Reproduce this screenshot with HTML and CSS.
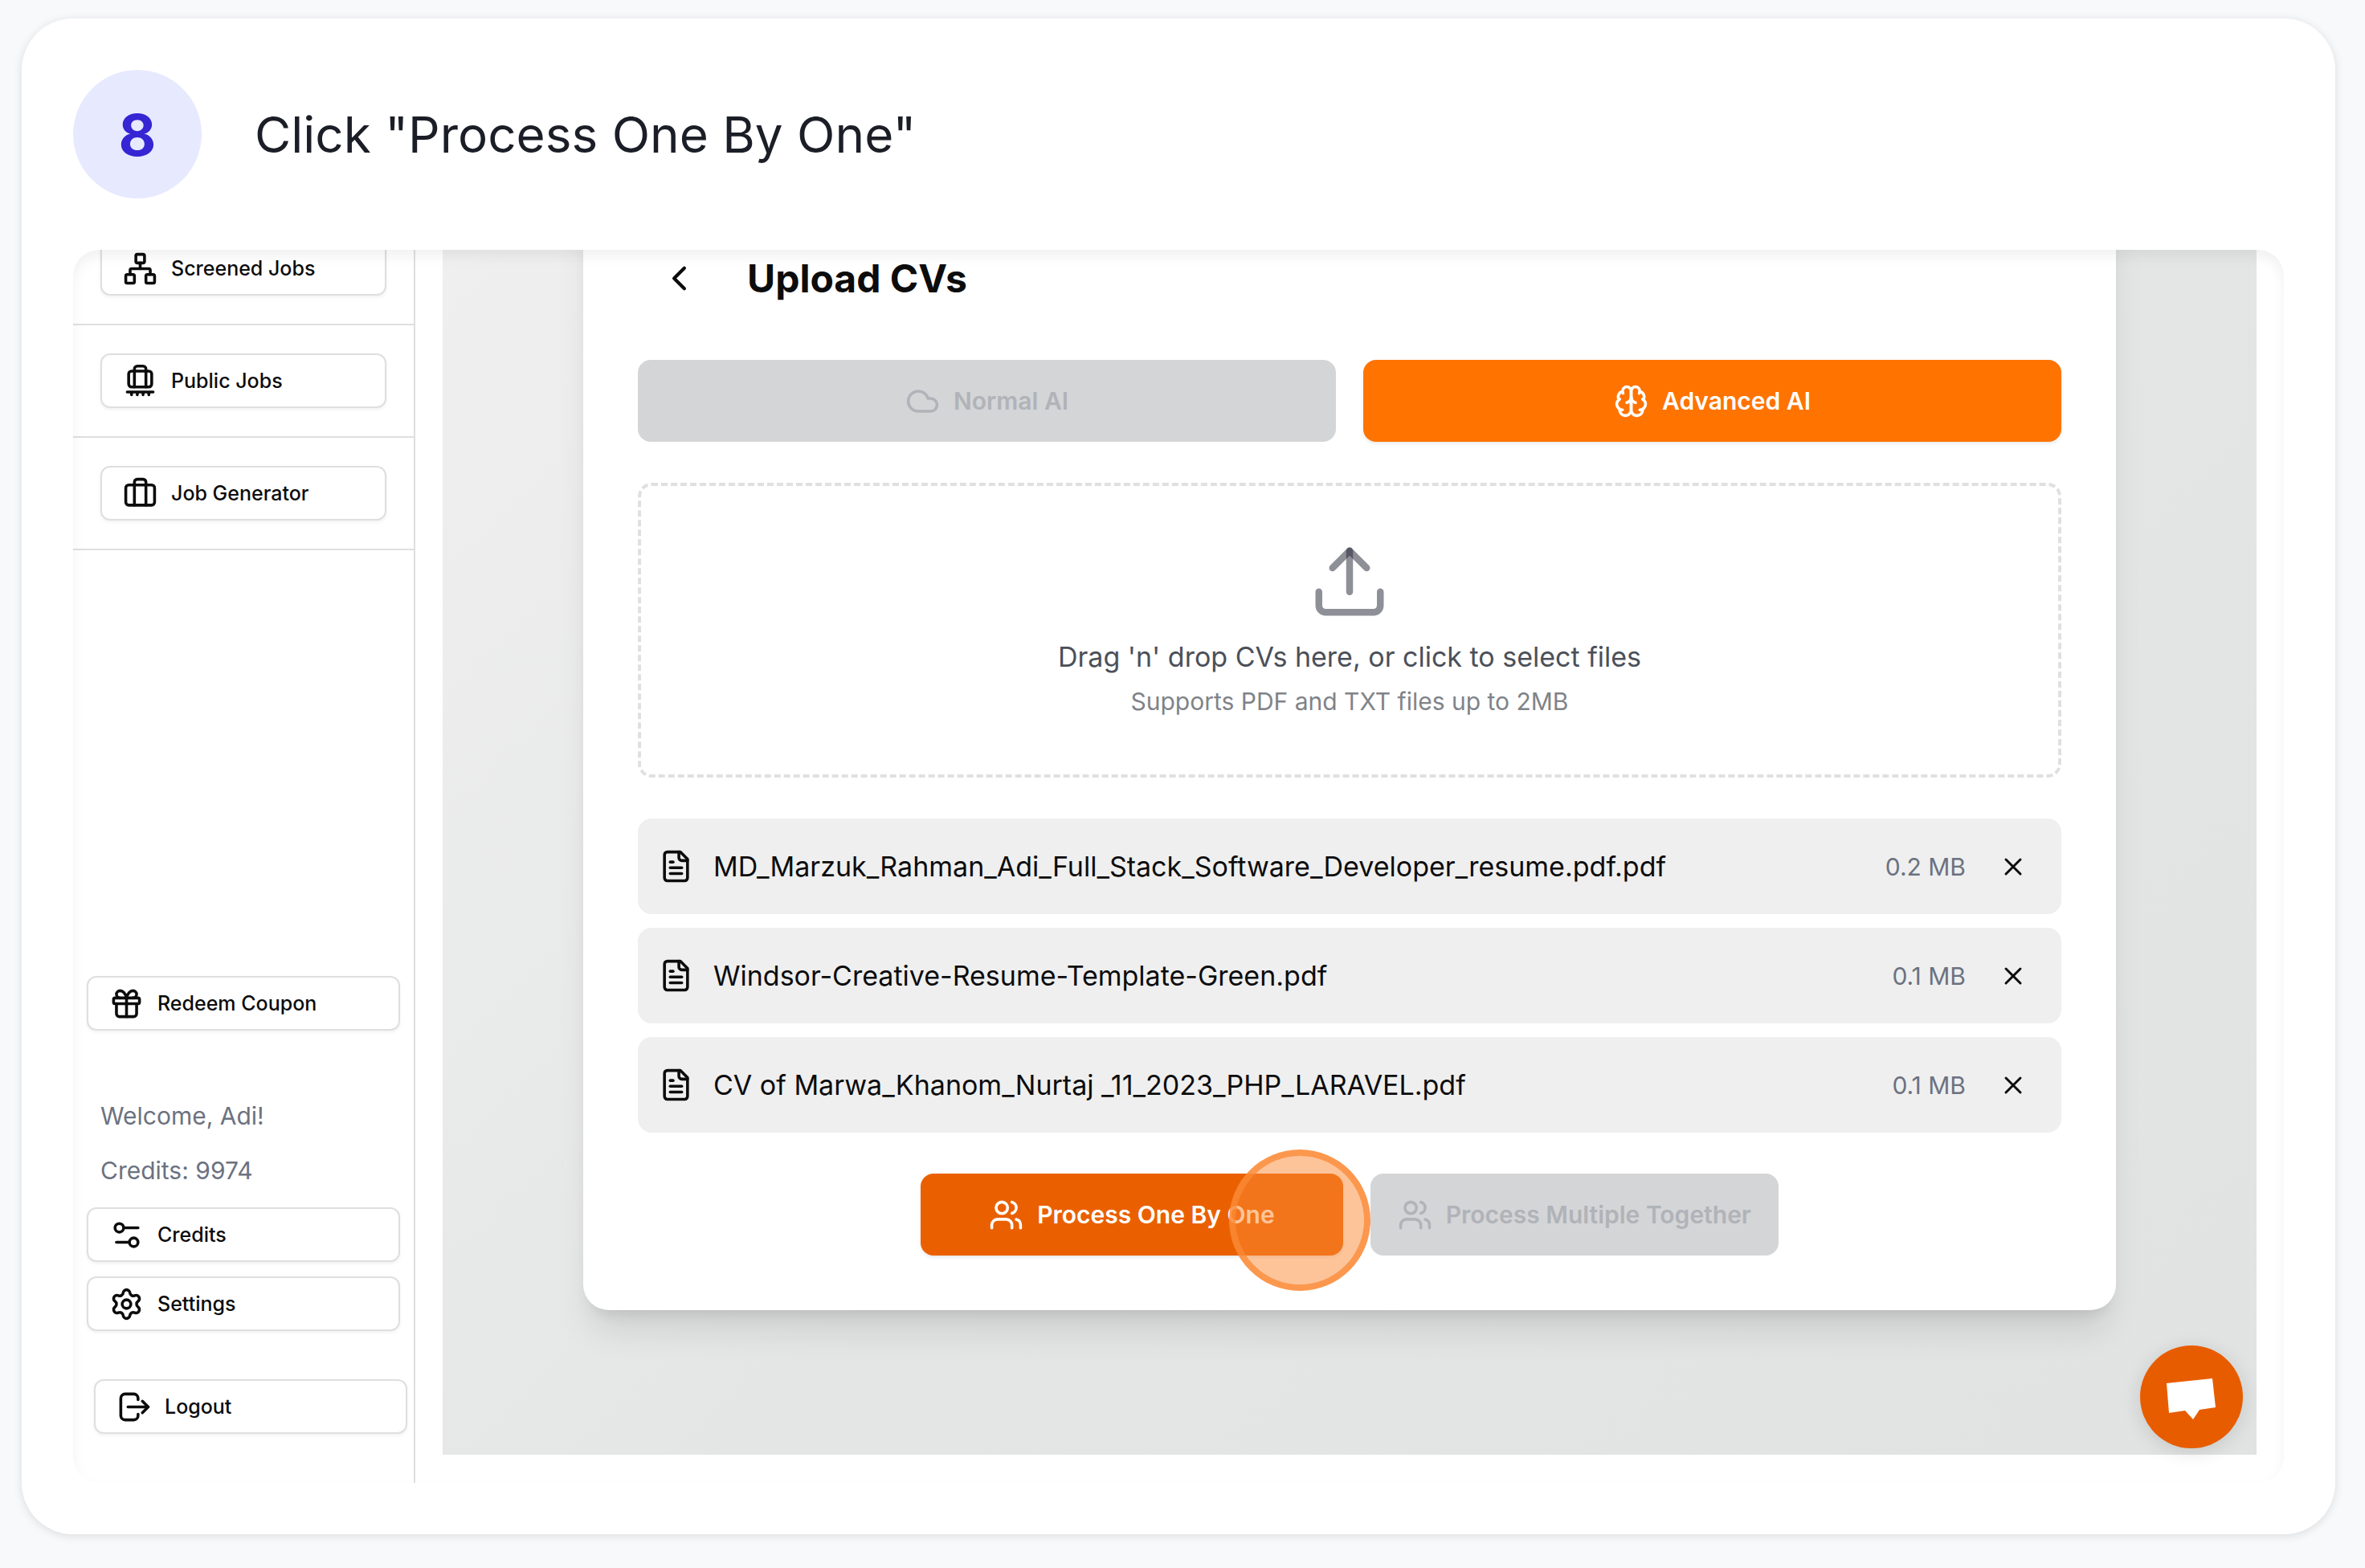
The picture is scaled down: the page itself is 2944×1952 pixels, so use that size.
FILE: index.html
```
<!DOCTYPE html>
<html lang="en">
<head>
  <meta charset="UTF-8">
  <meta name="viewport" content="width=device-width, initial-scale=1.0">
  <title>Process One By One</title>
  <link rel="stylesheet" href="styles.css">
</head>
<body>

  <div class="step-card">
    <header class="step-header">
      <span class="step-number">8</span>
      <h1>Click "Process One By One"</h1>
    </header>

    <div class="screen">
      <aside class="sidebar">
        <nav class="nav">
          <div class="nav-item">
            <button type="button" class="side-btn">
              <svg class="icon" viewBox="0 0 24 24"><rect x="16" y="16" width="6" height="6" rx="1"/><rect x="2" y="16" width="6" height="6" rx="1"/><rect x="9" y="2" width="6" height="6" rx="1"/><path d="M5 16v-3a1 1 0 0 1 1-1h12a1 1 0 0 1 1 1v3"/><path d="M12 12V8"/></svg>
              Screened Jobs
            </button>
          </div>
          <div class="nav-item">
            <button type="button" class="side-btn">
              <svg class="icon" viewBox="0 0 24 24"><rect x="4" y="5" width="16" height="11" rx="2"/><path d="M8 16V3.500a2 2 0 0 1 2-2h4a2 2 0 0 1 2 2V16"/><path d="M3 19.500h18"/><path d="M6 20v1.500M10 20v1.500M14 20v1.500M18 20v1.500"/></svg>
              Public Jobs
            </button>
          </div>
          <div class="nav-item">
            <button type="button" class="side-btn">
              <svg class="icon" viewBox="0 0 24 24"><path d="M16 20V4a2 2 0 0 0-2-2h-4a2 2 0 0 0-2 2v16"/><rect x="2" y="6" width="20" height="14" rx="2"/></svg>
              Job Generator
            </button>
          </div>
        </nav>

        <div class="account">
          <button type="button" class="side-btn">
            <svg class="icon" viewBox="0 0 24 24"><rect x="3" y="8" width="18" height="4" rx="1"/><path d="M12 8v13"/><path d="M19 12v7a2 2 0 0 1-2 2H7a2 2 0 0 1-2-2v-7"/><path d="M7.500 8a2.500 2.500 0 0 1 0-5A4.800 8 0 0 1 12 8a4.800 8 0 0 1 4.500-5 2.500 2.500 0 0 1 0 5"/></svg>
            Redeem Coupon
          </button>
          <div class="user-info">
            <p>Welcome, Adi!</p>
            <p>Credits: 9974</p>
          </div>
          <button type="button" class="side-btn">
            <svg class="icon" viewBox="0 0 24 24"><path d="M20 7h-9"/><path d="M14 17H5"/><circle cx="17" cy="17" r="3"/><circle cx="7" cy="7" r="3"/></svg>
            Credits
          </button>
          <button type="button" class="side-btn">
            <svg class="icon" viewBox="0 0 24 24"><path d="M9.671 4.136a2.340 2.340 0 0 1 4.659 0 2.340 2.340 0 0 0 3.319 1.915 2.340 2.340 0 0 1 2.330 4.033 2.340 2.340 0 0 0 0 3.831 2.340 2.340 0 0 1-2.330 4.033 2.340 2.340 0 0 0-3.319 1.915 2.340 2.340 0 0 1-4.659 0 2.340 2.340 0 0 0-3.320-1.915 2.340 2.340 0 0 1-2.330-4.033 2.340 2.340 0 0 0 0-3.831A2.340 2.340 0 0 1 6.350 6.051a2.340 2.340 0 0 0 3.319-1.915"/><circle cx="12" cy="12" r="3"/></svg>
            Settings
          </button>
        </div>

        <div class="logout">
          <button type="button" class="side-btn">
            <svg class="icon" viewBox="0 0 24 24"><path d="M15 7V6a3 3 0 0 0-3-3H6a3 3 0 0 0-3 3v12a3 3 0 0 0 3 3h6a3 3 0 0 0 3-3v-1"/><path d="M8 12h14"/><path d="m18 8 4 4-4 4"/></svg>
            Logout
          </button>
        </div>
      </aside>

      <main class="content">
        <section class="upload-card">
          <div class="card-title">
            <button type="button" class="back-btn" aria-label="Back">
              <svg class="icon icon-md" viewBox="0 0 24 24"><path d="m15 18-6-6 6-6"/></svg>
            </button>
            <h2>Upload CVs</h2>
          </div>

          <div class="modes">
            <button type="button" class="btn btn-muted">
              <svg class="icon" viewBox="0 0 24 24"><path d="M17.500 19H9a7 7 0 1 1 6.710-9h1.790a4.500 4.500 0 1 1 0 9Z"/></svg>
              Normal AI
            </button>
            <button type="button" class="btn btn-orange">
              <svg class="icon" viewBox="0 0 24 24"><path d="M12 5a3 3 0 1 0-5.997.125 4 4 0 0 0-2.526 5.770 4 4 0 0 0 .556 6.588A4 4 0 1 0 12 18Z"/><path d="M12 5a3 3 0 1 1 5.997.125 4 4 0 0 1 2.526 5.770 4 4 0 0 1-.556 6.588A4 4 0 1 1 12 18Z"/><path d="M15 13a4.500 4.500 0 0 1-3-4 4.500 4.500 0 0 1-3 4"/><path d="M17.599 6.500a3 3 0 0 0 .399-1.375"/><path d="M6.003 5.125A3 3 0 0 0 6.401 6.500"/><path d="M3.477 10.896a4 4 0 0 1 .585-.396"/><path d="M19.938 10.500a4 4 0 0 1 .585.396"/><path d="M6 18a4 4 0 0 1-1.967-.516"/><path d="M19.967 17.484A4 4 0 0 1 18 18"/></svg>
              Advanced AI
            </button>
          </div>

          <div class="dropzone">
            <svg class="icon icon-lg" viewBox="0 0 24 24"><path d="M21 15v4a2 2 0 0 1-2 2H5a2 2 0 0 1-2-2v-4"/><path d="m17 8-5-5-5 5"/><path d="M12 3v12"/></svg>
            <p class="drop-text">Drag 'n' drop CVs here, or click to select files</p>
            <p class="drop-hint">Supports PDF and TXT files up to 2MB</p>
          </div>

          <ul class="files">
            <li>
              <svg class="icon" viewBox="0 0 24 24"><path d="M15 2H6a2 2 0 0 0-2 2v16a2 2 0 0 0 2 2h12a2 2 0 0 0 2-2V7Z"/><path d="M14 2v4a2 2 0 0 0 2 2h4"/><path d="M10 9H8"/><path d="M16 13H8"/><path d="M16 17H8"/></svg>
              <span class="file-name">MD_Marzuk_Rahman_Adi_Full_Stack_Software_Developer_resume.pdf.pdf</span>
              <span class="file-size">0.2 MB</span>
              <button type="button" class="remove-btn" aria-label="Remove file">
                <svg class="icon icon-sm" viewBox="0 0 24 24"><path d="M18 6 6 18"/><path d="m6 6 12 12"/></svg>
              </button>
            </li>
            <li>
              <svg class="icon" viewBox="0 0 24 24"><path d="M15 2H6a2 2 0 0 0-2 2v16a2 2 0 0 0 2 2h12a2 2 0 0 0 2-2V7Z"/><path d="M14 2v4a2 2 0 0 0 2 2h4"/><path d="M10 9H8"/><path d="M16 13H8"/><path d="M16 17H8"/></svg>
              <span class="file-name">Windsor-Creative-Resume-Template-Green.pdf</span>
              <span class="file-size">0.1 MB</span>
              <button type="button" class="remove-btn" aria-label="Remove file">
                <svg class="icon icon-sm" viewBox="0 0 24 24"><path d="M18 6 6 18"/><path d="m6 6 12 12"/></svg>
              </button>
            </li>
            <li>
              <svg class="icon" viewBox="0 0 24 24"><path d="M15 2H6a2 2 0 0 0-2 2v16a2 2 0 0 0 2 2h12a2 2 0 0 0 2-2V7Z"/><path d="M14 2v4a2 2 0 0 0 2 2h4"/><path d="M10 9H8"/><path d="M16 13H8"/><path d="M16 17H8"/></svg>
              <span class="file-name">CV of Marwa_Khanom_Nurtaj _11_2023_PHP_LARAVEL.pdf</span>
              <span class="file-size">0.1 MB</span>
              <button type="button" class="remove-btn" aria-label="Remove file">
                <svg class="icon icon-sm" viewBox="0 0 24 24"><path d="M18 6 6 18"/><path d="m6 6 12 12"/></svg>
              </button>
            </li>
          </ul>

          <div class="actions">
            <div class="click-target">
              <button type="button" class="btn btn-process">
                <svg class="icon" viewBox="0 0 24 24"><path d="M16 21v-2a4 4 0 0 0-4-4H6a4 4 0 0 0-4 4v2"/><circle cx="9" cy="7" r="4"/><path d="M22 21v-2a4 4 0 0 0-3-3.870"/><path d="M16 3.130a4 4 0 0 1 0 7.750"/></svg>
                Process One By One
              </button>
              <span class="click-marker"></span>
            </div>
            <button type="button" class="btn btn-muted">
              <svg class="icon" viewBox="0 0 24 24"><path d="M16 21v-2a4 4 0 0 0-4-4H6a4 4 0 0 0-4 4v2"/><circle cx="9" cy="7" r="4"/><path d="M22 21v-2a4 4 0 0 0-3-3.870"/><path d="M16 3.130a4 4 0 0 1 0 7.750"/></svg>
              Process Multiple Together
            </button>
          </div>
        </section>
      </main>

      <button type="button" class="chat-btn" aria-label="Open chat">
        <svg viewBox="0 0 128 128"><path d="M33 47 90 41l4 36-20 3-8 12-10-11-20 3Z"/></svg>
      </button>
    </div>
  </div>

</body>
</html>
```

FILE: styles.css
```
* {
  box-sizing: border-box;
}

body {
  font-family: Inter, "Liberation Sans", sans-serif;
  margin: 0;
  padding: 23px 37px 41px 27px;
  background-color: #f8f9fb;
  color: #0c0c0d;
}

h1, h2, p, ul {
  margin: 0;
  padding: 0;
}

button {
  font-family: inherit;
  color: inherit;
  border: none;
  cursor: pointer;
}

.step-card {
  background-color: #fff;
  border-radius: 64px;
  padding: 64px;
  box-shadow: 0 2px 12px rgba(0, 0, 0, 0.12);
}

.step-header {
  display: flex;
  align-items: center;
  gap: 66px;
  margin-bottom: 64px;
}

.step-number {
  display: flex;
  align-items: center;
  justify-content: center;
  width: 160px;
  height: 160px;
  border-radius: 50%;
  background-color: #e7e9ff;
  color: #3525d3;
  font-size: 72px;
  font-weight: 700;
}

.step-header h1 {
  font-size: 62px;
  font-weight: 400;
  color: #1b1e26;
}

.screen {
  position: relative;
  display: flex;
  border-radius: 32px;
  overflow: hidden;
}

/* soft inner edge over the whole screen */
.screen::after {
  content: "";
  position: absolute;
  inset: 0;
  border-radius: 32px;
  box-shadow: inset 0 8px 16px rgba(0, 0, 0, 0.06);
  pointer-events: none;
}

.icon {
  flex: none;
  width: 43px;
  height: 43px;
  fill: none;
  stroke: currentColor;
  stroke-width: 2;
  stroke-linecap: round;
  stroke-linejoin: round;
}

.icon-sm {
  width: 36px;
  height: 36px;
}

.icon-md {
  width: 51px;
  height: 51px;
}

.icon-lg {
  width: 102px;
  height: 102px;
}

/* sidebar */
.sidebar {
  flex: none;
  display: flex;
  flex-direction: column;
  width: 426px;
  border-right: 2px solid #dfdfe0;
}

.nav {
  margin-top: -46px;
}

.nav-item {
  padding: 35px 34px;
  border-bottom: 2px solid #dfdfe0;
}

.side-btn {
  display: flex;
  align-items: center;
  gap: 17px;
  width: 100%;
  height: 68px;
  padding: 0 26px;
  border: 2px solid #dfdfe0;
  border-radius: 12px;
  background-color: #fff;
  box-shadow: 0 2px 4px rgba(0, 0, 0, 0.06);
  font-size: 25px;
  font-weight: 500;
}

.account {
  display: flex;
  flex-direction: column;
  gap: 12px;
  margin-top: auto;
  padding: 0 17px;
}

.account .side-btn + .side-btn {
  margin-top: 6px;
}

.user-info {
  margin-top: 60px;
  padding: 0 17px;
  font-size: 30px;
  line-height: 68px;
  color: #6b7280;
}

.logout {
  padding: 60px 8px 61px 26px;
}

/* main area */
.content {
  flex: 1;
  margin: 0 34px 35px;
  padding: 0 175px 180px;
  background: linear-gradient(135deg, #efefef, #e4e6e5 50%, #e1e3e2);
  overflow: hidden;
}

.upload-card {
  margin-top: -84px;
  padding: 68px;
  border-radius: 32px;
  background-color: #fff;
  box-shadow: 0 34px 43px -9px rgba(0, 0, 0, 0.1), 0 14px 17px -10px rgba(0, 0, 0, 0.1);
}

.card-title {
  display: flex;
  align-items: center;
  gap: 34px;
  height: 102px;
}

.card-title h2 {
  font-size: 48px;
  font-weight: 700;
}

.back-btn {
  display: flex;
  align-items: center;
  justify-content: center;
  width: 102px;
  height: 102px;
  background: none;
}

.modes {
  display: flex;
  gap: 34px;
  margin: 51px 0;
}

.modes .btn {
  flex: 1;
}

.btn {
  display: flex;
  align-items: center;
  justify-content: center;
  gap: 17px;
  height: 102px;
  padding: 0 34px;
  border-radius: 16px;
  font-size: 30px;
  font-weight: 600;
}

.btn-muted {
  background-color: #d4d5d7;
  color: #b0b3b8;
}

.btn-orange {
  background-color: #ff7300;
  color: #fff;
  box-shadow: 0 2px 4px rgba(0, 0, 0, 0.1);
}

.btn-process {
  padding: 0 85px;
  background-color: #ea6000;
  color: #fff;
  box-shadow: 0 2px 4px rgba(0, 0, 0, 0.1);
}

.dropzone {
  display: flex;
  flex-direction: column;
  align-items: center;
  padding: 68px;
  border: 4px dashed #e0e0e1;
  border-radius: 17px;
  text-align: center;
}

.dropzone .icon {
  stroke: rgba(29, 33, 48, 0.5);
}

.drop-text {
  margin-top: 17px;
  font-size: 34px;
  line-height: 51px;
  color: #4b5059;
}

.drop-hint {
  margin-top: 8px;
  font-size: 30px;
  line-height: 45px;
  color: #808388;
}

.files {
  display: flex;
  flex-direction: column;
  gap: 17px;
  margin: 51px 0;
  list-style-type: none;
}

.files li {
  display: flex;
  align-items: center;
  gap: 25px;
  height: 119px;
  padding: 0 26px;
  border-radius: 17px;
  background-color: #efefef;
}

.file-name {
  flex: 1;
  font-size: 34px;
}

.file-size {
  font-size: 30px;
  color: #6b7280;
}

.remove-btn {
  display: flex;
  align-items: center;
  justify-content: center;
  width: 68px;
  height: 68px;
  background: none;
}

.actions {
  display: flex;
  justify-content: center;
  gap: 34px;
}

.click-target {
  position: relative;
}

.click-marker {
  position: absolute;
  top: -30px;
  right: -34px;
  width: 176px;
  height: 176px;
  border: 8px solid rgba(251, 137, 53, 0.75);
  border-radius: 50%;
  background-color: rgba(251, 137, 53, 0.5);
  pointer-events: none;
}

.chat-btn {
  position: absolute;
  right: 51px;
  bottom: 43px;
  width: 128px;
  height: 128px;
  padding: 0;
  border-radius: 50%;
  background-color: #e85c00;
  box-shadow: 0 4px 24px rgba(0, 0, 0, 0.12);
}

.chat-btn svg {
  display: block;
  fill: #fff;
}
```
